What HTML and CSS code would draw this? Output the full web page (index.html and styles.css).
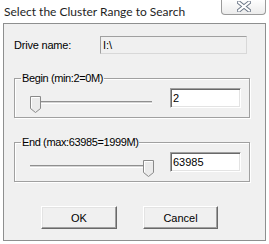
FILE: index.html
```html
<!DOCTYPE html>
<html lang="en">
<head>
    <meta charset="UTF-8">
    <title>Select the Cluster Range to Search</title>
    <link rel="stylesheet" href="styles.css">
</head>
<body>
    <div class="window">
        <div class="titlebar">
            <span class="title">Select the Cluster Range to Search</span>
            <div class="close-btn">
                <svg width="14" height="11" viewBox="0 0 14 11">
                    <path d="M2,1.5 L12,9.5 M12,1.5 L2,9.5" stroke="#6d7888" stroke-width="4" stroke-linecap="square"/>
                    <path d="M2,1.5 L12,9.5 M12,1.5 L2,9.5" stroke="#ffffff" stroke-width="2" stroke-linecap="square"/>
                </svg>
            </div>
        </div>
        <div class="client">
            <div class="drive-row">
                <label class="drive-label">Drive name:</label>
                <input class="drive-input" type="text" value="I:\" readonly>
            </div>

            <fieldset class="group">
                <legend>Begin (min:2=0M)</legend>
                <div class="slider-row">
                    <svg class="slider" width="124" height="20" viewBox="0 0 124 20">
                        <rect x="2" y="7" width="120" height="1" fill="#8f8f8f"/>
                        <rect x="2" y="8" width="120" height="1" fill="#d4d4d4"/>
                        <rect x="2" y="9" width="120" height="1" fill="#ffffff"/>
                        <path d="M0.5,2.5 H10.5 V14.5 L5.5,18.5 L0.5,14.5 Z" fill="#ebebeb" stroke="#8a8a8a"/>
                        <path d="M1.5,14 V3.5 H9.5" fill="none" stroke="#ffffff"/>
                    </svg>
                    <input class="num-input" type="text" value="2">
                </div>
            </fieldset>

            <fieldset class="group">
                <legend>End (max:63985=1999M)</legend>
                <div class="slider-row">
                    <svg class="slider" width="124" height="20" viewBox="0 0 124 20">
                        <rect x="0" y="7" width="118" height="1" fill="#8f8f8f"/>
                        <rect x="0" y="8" width="118" height="1" fill="#d4d4d4"/>
                        <rect x="0" y="9" width="118" height="1" fill="#ffffff"/>
                        <path d="M113.5,2.5 H123.5 V14.5 L118.5,18.5 L113.5,14.5 Z" fill="#ebebeb" stroke="#8a8a8a"/>
                        <path d="M114.5,14 V3.5 H122.5" fill="none" stroke="#ffffff"/>
                    </svg>
                    <input class="num-input" type="text" value="63985">
                </div>
            </fieldset>

            <div class="buttons">
                <button class="btn btn-ok">OK</button>
                <button class="btn btn-cancel">Cancel</button>
            </div>
        </div>
    </div>
</body>
</html>
```

FILE: styles.css
```css
body {
    margin: 0;
    background-color: #ffffff;
    font-family: "Liberation Sans", Arial, sans-serif;
    font-size: 11px;
    color: #000;
}
.window {
    width: 269px;
    height: 244px;
}
.titlebar {
    height: 23px;
    display: flex;
    justify-content: space-between;
    align-items: flex-start;
}
.title {
    font-family: Lato, "Noto Sans", sans-serif;
    font-size: 12px;
    line-height: 16px;
    margin: 4px 0 0 4px;
    color: #1e1e1e;
}
.close-btn {
    width: 43px;
    height: 15px;
    margin-right: 3px;
    margin-top: -1px;
    border: 1px solid #9a9a9a;
    border-top: none;
    border-radius: 0 0 4px 4px;
    background: linear-gradient(#ffffff, #ececec);
    display: flex;
    align-items: center;
    justify-content: center;
}
.client {
    margin: 0 3px;
    height: 218px;
    box-sizing: border-box;
    border: 1px solid #8e8f8f;
    background-color: #f0f0f0;
    padding: 12px 0 0 10px;
}
.drive-row {
    display: flex;
    align-items: center;
}
.drive-label {
    width: 86px;
    letter-spacing: -0.2px;
}
.drive-input {
    width: 147px;
    height: 18px;
    box-sizing: border-box;
    margin: 0;
    padding: 0 2px;
    border: 1px solid;
    border-color: #a0a0a0 #d8d8d8 #d8d8d8 #a0a0a0;
    background-color: #f0f0f0;
    font-family: "Liberation Sans", Arial, sans-serif;
    font-size: 11px;
    color: #000;
    outline: none;
}
.group {
    width: 236px;
    box-sizing: border-box;
    margin: 18px 0 0 0;
    padding: 3px 0 9px 0;
    border: 1px solid #a0a0a0;
    box-shadow: inset 1px 1px #ffffff, 1px 1px #ffffff;
}
.group legend {
    padding: 0 1px;
    margin-left: 6px;
    line-height: 13px;
    letter-spacing: -0.38px;
}
.slider-row {
    display: flex;
    align-items: flex-start;
    height: 20px;
}
.slider {
    display: block;
    flex-shrink: 0;
    margin: 6px 0 0 15px;
}
.num-input {
    width: 71px;
    height: 20px;
    box-sizing: border-box;
    margin: 0 0 0 16px;
    padding: 0 2px;
    border: 1px solid;
    border-color: #a0a0a0 #ffffff #ffffff #a0a0a0;
    box-shadow: inset 1px 1px #696969, inset -1px -1px #e3e3e3;
    background-color: #ffffff;
    font-family: "Liberation Sans", Arial, sans-serif;
    font-size: 11px;
    color: #000;
    outline: none;
}
.buttons {
    display: flex;
    margin-top: 24px;
    padding-left: 27px;
}
.btn {
    height: 23px;
    box-sizing: border-box;
    padding: 0;
    border: 1px solid;
    border-color: #ffffff #696969 #696969 #ffffff;
    box-shadow: inset -1px -1px #a0a0a0, inset 1px 1px #e3e3e3;
    background-color: #f0f0f0;
    font-family: "Liberation Sans", Arial, sans-serif;
    font-size: 11px;
    color: #000;
}
.btn-ok {
    width: 76px;
}
.btn-cancel {
    width: 75px;
    margin-left: 26px;
}
```
